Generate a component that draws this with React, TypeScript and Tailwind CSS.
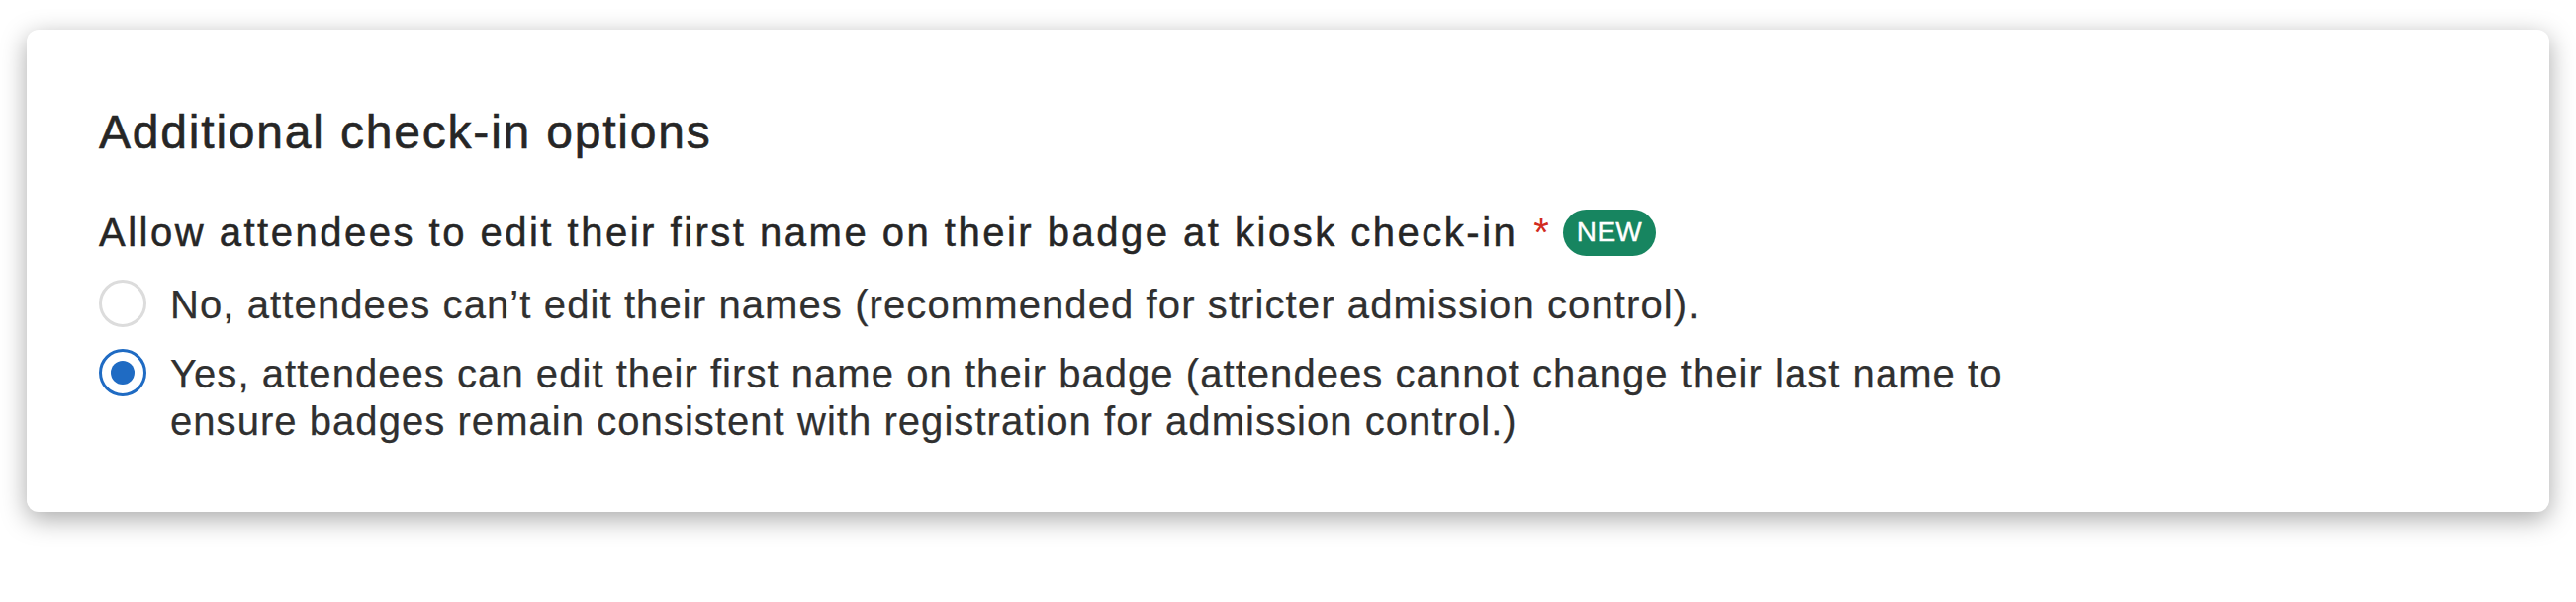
import React from "react";

function Radio({ checked }: { checked: boolean }) {
  return (
    <span
      className={
        checked
          ? "mt-[-1px] flex h-[48px] w-[48px] shrink-0 items-center justify-center rounded-full border-[3px] border-[#1f6bc3] bg-white"
          : "mt-[-1px] flex h-[48px] w-[48px] shrink-0 items-center justify-center rounded-full border-[3px] border-[#dcdcdc] bg-white"
      }
    >
      {checked && <span className="block h-[24px] w-[24px] rounded-full bg-[#1f6bc3]" />}
    </span>
  );
}

export default function App() {
  return (
    <div className="min-h-[609px] bg-white px-[27px] pt-[30px] font-[family-name:'Liberation_Sans',Arial,sans-serif]">
      <div className="rounded-[12px] bg-white pb-[68px] pl-[73px] pr-[73px] pt-[76px] shadow-[0_7px_26px_rgba(0,0,0,0.34)]">
        <h2 className="text-[48px] font-normal leading-[56px] tracking-[1.8px] text-[#262626] [-webkit-text-stroke:0.6px_#262626]">
          Additional check-in options
        </h2>

        <div className="mt-[49px] flex items-center">
          <span className="text-[40px] leading-[48px] tracking-[2.5px] text-[#262626] [-webkit-text-stroke:0.5px_#262626]">
            Allow attendees to edit their first name on their badge at kiosk check-in
          </span>
          <span className="ml-[16px] text-[40px] leading-[48px] text-[#d22b20]">*</span>
          <span className="ml-[14px] flex h-[47px] items-center rounded-full bg-[#178560] px-[14px] text-[28px] leading-none tracking-[0.3px] text-white [-webkit-text-stroke:0.4px_#ffffff]">
            NEW
          </span>
        </div>

        <div className="mt-[25px] flex flex-col gap-[22px]">
          <label className="flex items-start gap-[24px]">
            <Radio checked={false} />
            <span className="max-w-[1920px] text-[40px] leading-[48px] tracking-[1.1px] text-[#303030] [-webkit-text-stroke:0.25px_#303030]">
              No, attendees can’t edit their names (recommended for stricter admission control).
            </span>
          </label>
          <label className="flex items-start gap-[24px]">
            <Radio checked={true} />
            <span className="max-w-[1920px] text-[40px] leading-[48px] tracking-[1.05px] text-[#303030] [-webkit-text-stroke:0.25px_#303030]">
              Yes, attendees can edit their first name on their badge (attendees cannot change their last name to ensure badges remain consistent with registration for admission control.)
            </span>
          </label>
        </div>
      </div>
    </div>
  );
}
